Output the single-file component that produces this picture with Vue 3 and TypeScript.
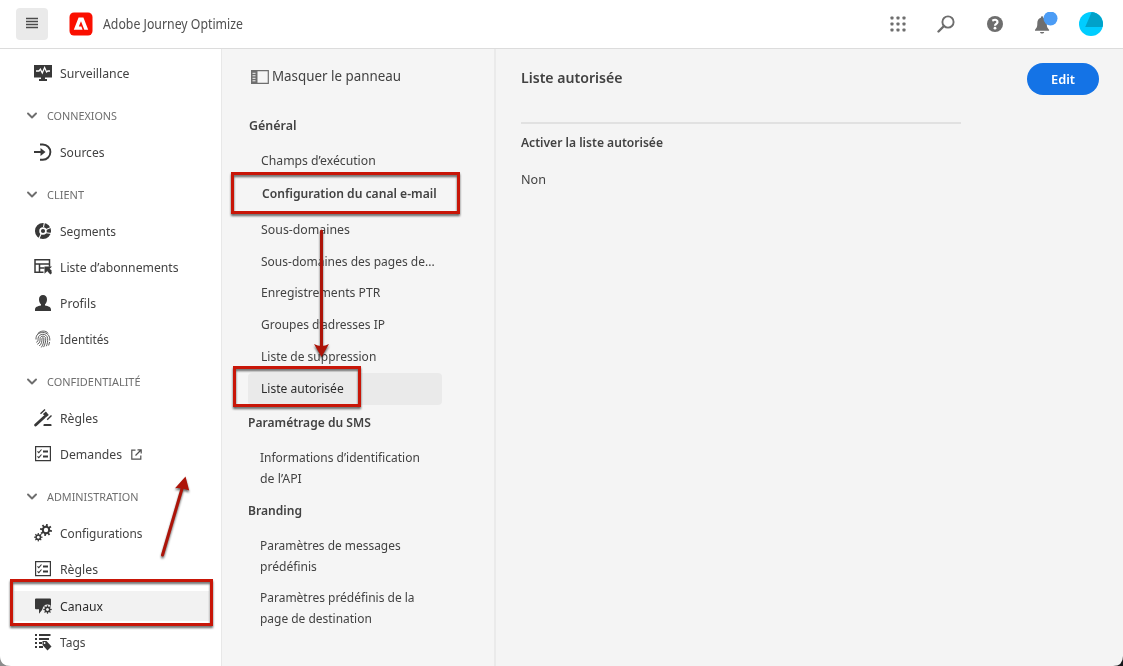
<script setup lang="ts">
import type { Directive } from 'vue'

interface NavEntry {
  label: string
  width: number
  icon?: string
  header?: boolean
  active?: boolean
  external?: boolean
}

interface PanelEntry {
  lines: { text: string; width: number }[]
  kind: string
}

const nav: NavEntry[] = [
  { label: 'Surveillance', width: 69.5, icon: 'monitor' },
  { label: 'CONNEXIONS', width: 70, header: true },
  { label: 'Sources', width: 44.5, icon: 'source' },
  { label: 'CLIENT', width: 37, header: true },
  { label: 'Segments', width: 56, icon: 'segments' },
  { label: 'Liste d’abonnements', width: 118.5, icon: 'list' },
  { label: 'Profils', width: 36, icon: 'user' },
  { label: 'Identités', width: 49, icon: 'finger' },
  { label: 'CONFIDENTIALITÉ', width: 93.5, header: true },
  { label: 'Règles', width: 38, icon: 'gavel' },
  { label: 'Demandes', width: 62, icon: 'checks', external: true },
  { label: 'ADMINISTRATION', width: 91.5, header: true },
  { label: 'Configurations', width: 82.5, icon: 'gears' },
  { label: 'Règles', width: 38, icon: 'checks' },
  { label: 'Canaux', width: 43, icon: 'chat', active: true },
  { label: 'Tags', width: 25.5, icon: 'tags' },
]

const panel: PanelEntry[] = [
  { kind: 'title general', lines: [{ text: 'Général', width: 47.5 }] },
  { kind: 'item first', lines: [{ text: 'Champs d’exécution', width: 114.7 }] },
  { kind: 'item strong', lines: [{ text: 'Configuration du canal e-mail', width: 174.7 }] },
  { kind: 'item', lines: [{ text: 'Sous-domaines', width: 89 }] },
  { kind: 'item', lines: [{ text: 'Sous-domaines des pages de...', width: 173.7 }] },
  { kind: 'item up', lines: [{ text: 'Enregistrements PTR', width: 119.3 }] },
  { kind: 'item up', lines: [{ text: 'Groupes d’adresses IP', width: 124 }] },
  { kind: 'item up', lines: [{ text: 'Liste de suppression', width: 115.3 }] },
  { kind: 'item up current', lines: [{ text: 'Liste autorisée', width: 82.7 }] },
  { kind: 'title sms', lines: [{ text: 'Paramétrage du SMS', width: 122.8 }] },
  { kind: 'item multi', lines: [{ text: 'Informations d’identification', width: 159.8 }, { text: 'de l’API', width: 41.8 }] },
  { kind: 'title', lines: [{ text: 'Branding', width: 54 }] },
  { kind: 'item multi', lines: [{ text: 'Paramètres de messages', width: 140.6 }, { text: 'prédéfinis', width: 56.8 }] },
  { kind: 'item multi', lines: [{ text: 'Paramètres prédéfinis de la', width: 154.6 }, { text: 'page de destination', width: 111.8 }] },
]

const dots = [0, 1, 2, 3, 4, 5, 6, 7, 8]
const teeth = [0, 45, 90, 135, 180, 225, 270, 315]

// Condenses a label horizontally to its column width.
const vFit: Directive<HTMLElement, number> = {
  mounted(el, binding) {
    const natural = el.getBoundingClientRect().width
    el.style.transform = `scaleX(${binding.value / natural})`
    el.style.marginRight = `${binding.value - natural}px`
  },
}
</script>

<template>
  <div class="app">
    <header class="topbar">
      <button class="menu" aria-label="Menu">
        <svg width="12" height="12" viewBox="0 0 12 12"><path d="M0 1.500h12M0 4.500h12M0 7.500h12M0 10.500h12" stroke="#4b4b4b" stroke-width="1.600" /></svg>
      </button>
      <svg class="logo" width="24" height="24" viewBox="0 0 24 24">
        <rect x=".5" y=".5" width="23" height="23" rx="4.5" fill="#fa0f00" />
        <path d="M9.600 5.500h4.800L19.200 17.700h-3.900L12 9.200 9.800 14.400h2.600l1.200 3.300H4.800z" fill="#fff" />
      </svg>
      <span v-fit="140" class="fit brand">Adobe Journey Optimize</span>
      <div class="tools">
        <svg width="16" height="16" viewBox="0 0 16 16" fill="#6e6e6e">
          <rect v-for="d in dots" :key="d" :x="0.5 + (d % 3) * 6" :y="0.5 + Math.floor(d / 3) * 6" width="3" height="3" rx=".7" />
        </svg>
        <svg width="18" height="18" viewBox="0 0 18 18" fill="none" stroke="#6e6e6e">
          <circle cx="11" cy="7" r="5.6" stroke-width="1.9" /><path d="M7 11 1.500 16.500" stroke-width="2.400" stroke-linecap="round" />
        </svg>
        <svg width="18" height="18" viewBox="0 0 18 18">
          <circle cx="9" cy="9" r="8" fill="#6e6e6e" />
          <path d="M6.300 5.700c3-1.900 5.400-.6 5.200 1.400-.2 1.700-2.500 1.700-2.500 3.600" fill="none" stroke="#fff" stroke-width="2.200" /><circle cx="9" cy="13.200" r="1.400" fill="#fff" />
        </svg>
        <svg width="26" height="24" viewBox="0 0 26 24">
          <path d="M8 4.300c.9 0 1.200.7 1.200 1.500 2.600.7 3.600 3 3.600 5.800 0 4 .9 4.600 2.300 6.200v1H1v-1c1.400-1.600 2.300-2.200 2.300-6.200 0-2.800 1-5.100 3.600-5.800 0-.8.3-1.500 1.100-1.500M6 20h4.200c-.3 2-3.900 2-4.200 0" fill="#6e6e6e" />
          <circle cx="16.500" cy="6.500" r="7" fill="#4b9cf5" />
        </svg>
        <svg width="24" height="24" viewBox="0 0 24 24">
          <circle cx="12" cy="12" r="12" fill="#00cdff" /><path d="M12.700 0A12 12 0 0 1 23.600 15L6.200 15z" fill="#00a2c9" />
        </svg>
      </div>
    </header>

    <div class="content">
      <nav class="sidebar">
        <div v-for="(n, i) in nav" :key="i" :class="n.header ? 'group' : ['link', { active: n.active }]">
          <svg v-if="n.header" class="chevron" width="11" height="8" viewBox="0 0 11 8"><path d="m1 1.500 4 4L9 1.500" fill="none" stroke="#6e6e6e" stroke-width="1.900" stroke-linecap="round" stroke-linejoin="round" /></svg>
          <svg v-else class="icon" width="18" height="18" viewBox="0 0 18 18" fill="#383838">
            <template v-if="n.icon === 'monitor'">
              <path d="M0 1h18v12.500H11V15h2v2H5v-2h2v-1.500H0z" />
              <path d="M2 7h3l1.400-1.800L8.300 9l2.300-5.400 2 4.300L13.800 7H16" fill="none" stroke="#fff" stroke-width="1.300" />
            </template>
            <template v-else-if="n.icon === 'source'">
              <path d="M6 1.500h2.800a7.600 7.600 0 0 1 0 15.200H6" fill="none" stroke="#383838" stroke-width="1.900" />
              <path d="M0 8.100h6.500V5l5 4-5 4V9.900H0z" />
            </template>
            <template v-else-if="n.icon === 'segments'">
              <circle cx="9" cy="9" r="5.900" fill="none" stroke="#383838" stroke-width="4.300" />
              <circle cx="9" cy="9" r="2.100" />
              <path d="m9.500 5 1-5M11 8l7-3M12 10.700l5.500.8M7.500 11l-2.700 6" stroke="#fff" stroke-width="1.100" />
            </template>
            <template v-else-if="n.icon === 'list'">
              <path d="M9.500 14.300H1V1.700h14.500v7M1 6h14.500M5.500 6v8M5.500 10h5" fill="none" stroke="#383838" stroke-width="1.500" />
              <path d="M10.500 8.500H18l-2.300 2.300L18 13.100 16.500 14.600l-2.200-2.300-3.800 3.500z" />
              <path d="m14 12.300 3.200 3.400" stroke="#383838" stroke-width="2.300" />
            </template>
            <template v-else-if="n.icon === 'user'">
              <path d="M9 1c2.500 0 4 1.700 4 4.200 0 2.300-.8 4.100-2 5v1.200c3.500.6 6 1.500 6 4.300V17H1v-1.300c0-2.800 2.500-3.700 6-4.300v-1.200c-1.200-.9-2-2.700-2-5C5 2.700 6.500 1 9 1" />
            </template>
            <g v-else-if="n.icon === 'finger'" fill="none" stroke="#4b4b4b" stroke-width=".9">
              <path d="M3.600 3.800C6.500.3 11.800.2 14.200 3.300M2 9.500C1.700 4.300 5.200 2.600 8.600 2.500c5 0 7.400 3.300 7.200 8M2.300 12.300c2-.9 1.700-2 1.800-4 .5-5.100 8.800-5.500 9.500 0 .3 3-.3 5.500-1.200 7.900M3.300 14.300c2.900-1.400 2.700-3.300 2.800-5.900.2-2.900 5.300-3.100 5.600.1.200 3.200-.8 6-2.100 8.600M5.200 16c2.500-2 2.700-4.500 2.800-7.500.1-1.200 1.900-1 1.900.1 0 3.400-.9 6.500-2.600 8.800M15.600 12l-1 3.500" />
            </g>
            <template v-else-if="n.icon === 'gavel'">
              <path d="M1.600 16 10.300 8" stroke="#383838" stroke-width="2.800" stroke-linecap="round" />
              <path d="m8.900 5 3-2.600 2.900 3.500-3 2.700z" />
              <path d="m6.500 4.800 4.500-4.300M13.200 10.800 17.500 6.500" stroke="#383838" stroke-width="1.400" />
              <path d="M9.500 17v-1.200q0-.8 1-.8h6q1 0 1 .8V17z" />
            </template>
            <template v-else-if="n.icon === 'checks'">
              <path d="M1.600 1.600h14.800v14H1.600z" fill="none" stroke="#383838" stroke-width="1.200" />
              <path d="m3.500 6.300 1.300 1.300L7.500 4.500m-4 6.800 1.300 1.300 2.700-3.100" fill="none" stroke="#383838" stroke-width="1.100" />
              <path d="M9 6.500h5M9 11.500h5" stroke="#383838" stroke-width="1.900" />
            </template>
            <template v-else-if="n.icon === 'gears'">
              <g transform="translate(12 6)"><circle r="3.200" fill="none" stroke="#383838" stroke-width="2" /><rect v-for="a in teeth" :key="a" x="-.9" y="-6" width="1.800" height="2.700" :transform="`rotate(${a + 10})`" /></g>
              <g transform="translate(4.300 13.200)"><circle r="2.200" fill="none" stroke="#383838" stroke-width="1.500" /><rect v-for="a in teeth" :key="a" x="-.6" y="-4.200" width="1.200" height="1.900" :transform="`rotate(${a})`" /></g>
            </template>
            <template v-else-if="n.icon === 'chat'">
              <path d="M2 1.500h14q1 0 1 1v7L9 11.800 5 16.700v-4.500H2q-1 0-1-1V2.500q0-1 1-1" />
              <circle cx="13.500" cy="12.500" r="5" fill="#f2f2f2" />
              <g transform="translate(13.500 12.500)"><circle r="2.200" fill="none" stroke="#383838" stroke-width="1.500" /><rect v-for="a in teeth" :key="a" x="-.6" y="-4.200" width="1.200" height="1.900" :transform="`rotate(${a})`" /></g>
            </template>
            <template v-else>
              <path d="M1 2h2M1 6h2M1 10h2M1 14h2M5 2h11.500M5 6h10M5 10h3M5 14h4" stroke="#383838" stroke-width="1.900" />
              <path d="M8.500 8h4l5 5.500-4 4L8.500 12z" /><circle cx="10.600" cy="10" r=".9" fill="#fff" />
            </template>
          </svg>
          <span v-fit="n.width" class="fit">{{ n.label }}</span>
          <svg v-if="n.external" class="external" width="11" height="11" viewBox="0 0 11 11" fill="none" stroke="#505050" stroke-width="1.200">
            <path d="M4.500 1.200H.8v9h9V6.500M4.500 6.500 9.500 1.500M6.500.8h3.700v3.700" />
          </svg>
        </div>
      </nav>

      <aside class="panel">
        <div class="toggle">
          <svg width="18" height="14" viewBox="0 0 18 14"><path d="M.7.700h16.600v12.600H.700z" fill="none" stroke="#6e6e6e" stroke-width="1.200" /><path d="M0 0h6.500v14H0z" fill="#6e6e6e" /><path d="M1.500 3.300h3M1.500 5.800h3M1.500 8.300h3M1.500 10.800h3" stroke="#f5f5f5" /></svg>
          <span v-fit="129" class="fit">Masquer le panneau</span>
        </div>
        <div v-for="(p, i) in panel" :key="i" :class="p.kind">
          <div v-for="l in p.lines" :key="l.text" class="line"><span v-fit="l.width" class="fit">{{ l.text }}</span></div>
        </div>
      </aside>

      <main class="main">
        <div class="heading">
          <h1><span v-fit="101.5" class="fit">Liste autorisée</span></h1>
          <button class="edit"><span v-fit="24" class="fit">Edit</span></button>
        </div>
        <hr />
        <h2><span v-fit="142" class="fit">Activer la liste autorisée</span></h2>
        <p><span v-fit="25" class="fit">Non</span></p>
      </main>
    </div>

    <svg class="annotations" width="1123" height="666" viewBox="0 0 1123 666">
      <path d="M0 656Q0 666 11 666H0z" fill="#8b8b8b" />
      <path d="M1123 656q0 10-10 10h10z" fill="#17191c" />
      <g class="marks">
        <g fill="none" stroke="#c81608" stroke-width="3">
          <rect x="232.500" y="173.500" width="226" height="39" />
          <rect x="234.500" y="367.500" width="125" height="38" />
          <rect x="11.500" y="580.500" width="200" height="44" />
        </g>
        <g stroke="#ad1409" stroke-width="3" stroke-linecap="round" fill="#ad1409">
          <path d="M321.500 231V350" /><path d="m162.500 555 20.300-69" />
        </g>
        <path d="M314 344q7.500 4 15 0L321.500 357zM185.500 476.500 175 488.200q7-.8 14.200 2.400z" fill="#ad1409" />
      </g>
    </svg>
  </div>
</template>

<style>
body { margin: 0; overflow: hidden; }
</style>

<style scoped>
* { box-sizing: border-box; }
.app { position: relative; width: 1123px; height: 666px; overflow: hidden; display: flex; flex-direction: column; background: #fff; color: #424242; font: 13px/20px "Noto Sans", "Open Sans", sans-serif; }
.fit { display: inline-block; white-space: nowrap; transform-origin: 0 50%; flex: none; }
.topbar { height: 49px; flex: none; display: flex; align-items: center; padding: 0 20px 0 16px; border-bottom: 1px solid #dcdcdc; }
.menu { width: 32px; height: 32px; border: 0; border-radius: 4px; background: #eaeaea; padding: 0; display: flex; align-items: center; justify-content: center; }
.menu svg { margin-top: -2px; }
.logo { margin: 0 10px 0 21px; }
.brand { color: #505050; font-size: 13.500px; }
.tools { margin-left: auto; display: flex; align-items: center; }
.tools svg:nth-child(1) { margin-right: 31px; }
.tools svg:nth-child(2) { margin-right: 31px; }
.tools svg:nth-child(3) { margin-right: 30px; }
.tools svg:nth-child(4) { margin: -1px 19px 0 0; }
.content { flex: 1; display: flex; min-height: 0; }
.sidebar { width: 222px; padding-top: 6px; border-right: 1px solid #e8e8e8; flex: none; overflow: hidden; }
.link, .group { height: 36px; display: flex; align-items: center; }
.link { padding-left: 34px; }
.icon { margin-right: 7.500px; flex: none; }
.group { margin-top: 7px; padding-left: 27px; font-size: 11px; color: #6e6e6e; }
.chevron { margin-right: 8.500px; flex: none; }
.active { position: relative; top: 1px; height: 30px; margin: 3px 12px 3px 14px; padding-left: 20px; background: #f2f2f2; color: #2c2c2c; }
.active + .link { margin-top: 4px; }
.external { margin-left: 9.500px; }
.panel { width: 274px; padding: 12px 52px 0 26px; background: #f5f5f5; border-right: 2px solid #eaeaea; flex: none; }
.toggle { height: 32px; display: flex; align-items: center; font-size: 14px; padding-left: 3px; margin-bottom: 16px; gap: 3px; }
.toggle .fit { margin-top: -2px; }
.title { height: 32px; line-height: 32px; font-weight: 650; }
.general { padding-left: .500px; }
.item { height: 32px; line-height: 32px; padding-left: 12.700px; border-radius: 4px; }
.first { margin-top: 3px; }
.strong { margin: 1px 0 4px; font-weight: 650; padding-left: 13.500px; }
.up { line-height: 30px; }
.current { background: #eaeaea; color: #2c2c2c; }
.sms { margin-top: 1px; }
.multi { height: auto; line-height: 21px; padding: 5px 0 5px 11.700px; }
.title + .multi { padding-top: 9px; }
.line { height: 100%; white-space: nowrap; }
.multi .line { height: 21px; }
.main { flex: 1; background: #f4f4f4; padding: 14px 24px 0 25px; }
.heading { display: flex; justify-content: space-between; height: 59px; }
h1 { margin: 0; font-size: 14.500px; line-height: 28px; font-weight: 650; }
.edit { width: 72px; height: 32px; border: 0; border-radius: 16px; background: #1473e6; color: #fff; font: 600 13px/20px "Noto Sans", sans-serif; padding: 0; }
hr { width: 440px; height: 2px; border: 0; background: #e1e1e1; margin: 0; }
h2 { margin: 8px 0 0; font-size: 13px; line-height: 20px; font-weight: 650; }
p { margin: 17px 0 0; line-height: 20px; }
.annotations { position: absolute; inset: 0; pointer-events: none; }
.marks { filter: drop-shadow(0 2px 1px rgba(0, 0, 0, 0.6)); }
</style>
